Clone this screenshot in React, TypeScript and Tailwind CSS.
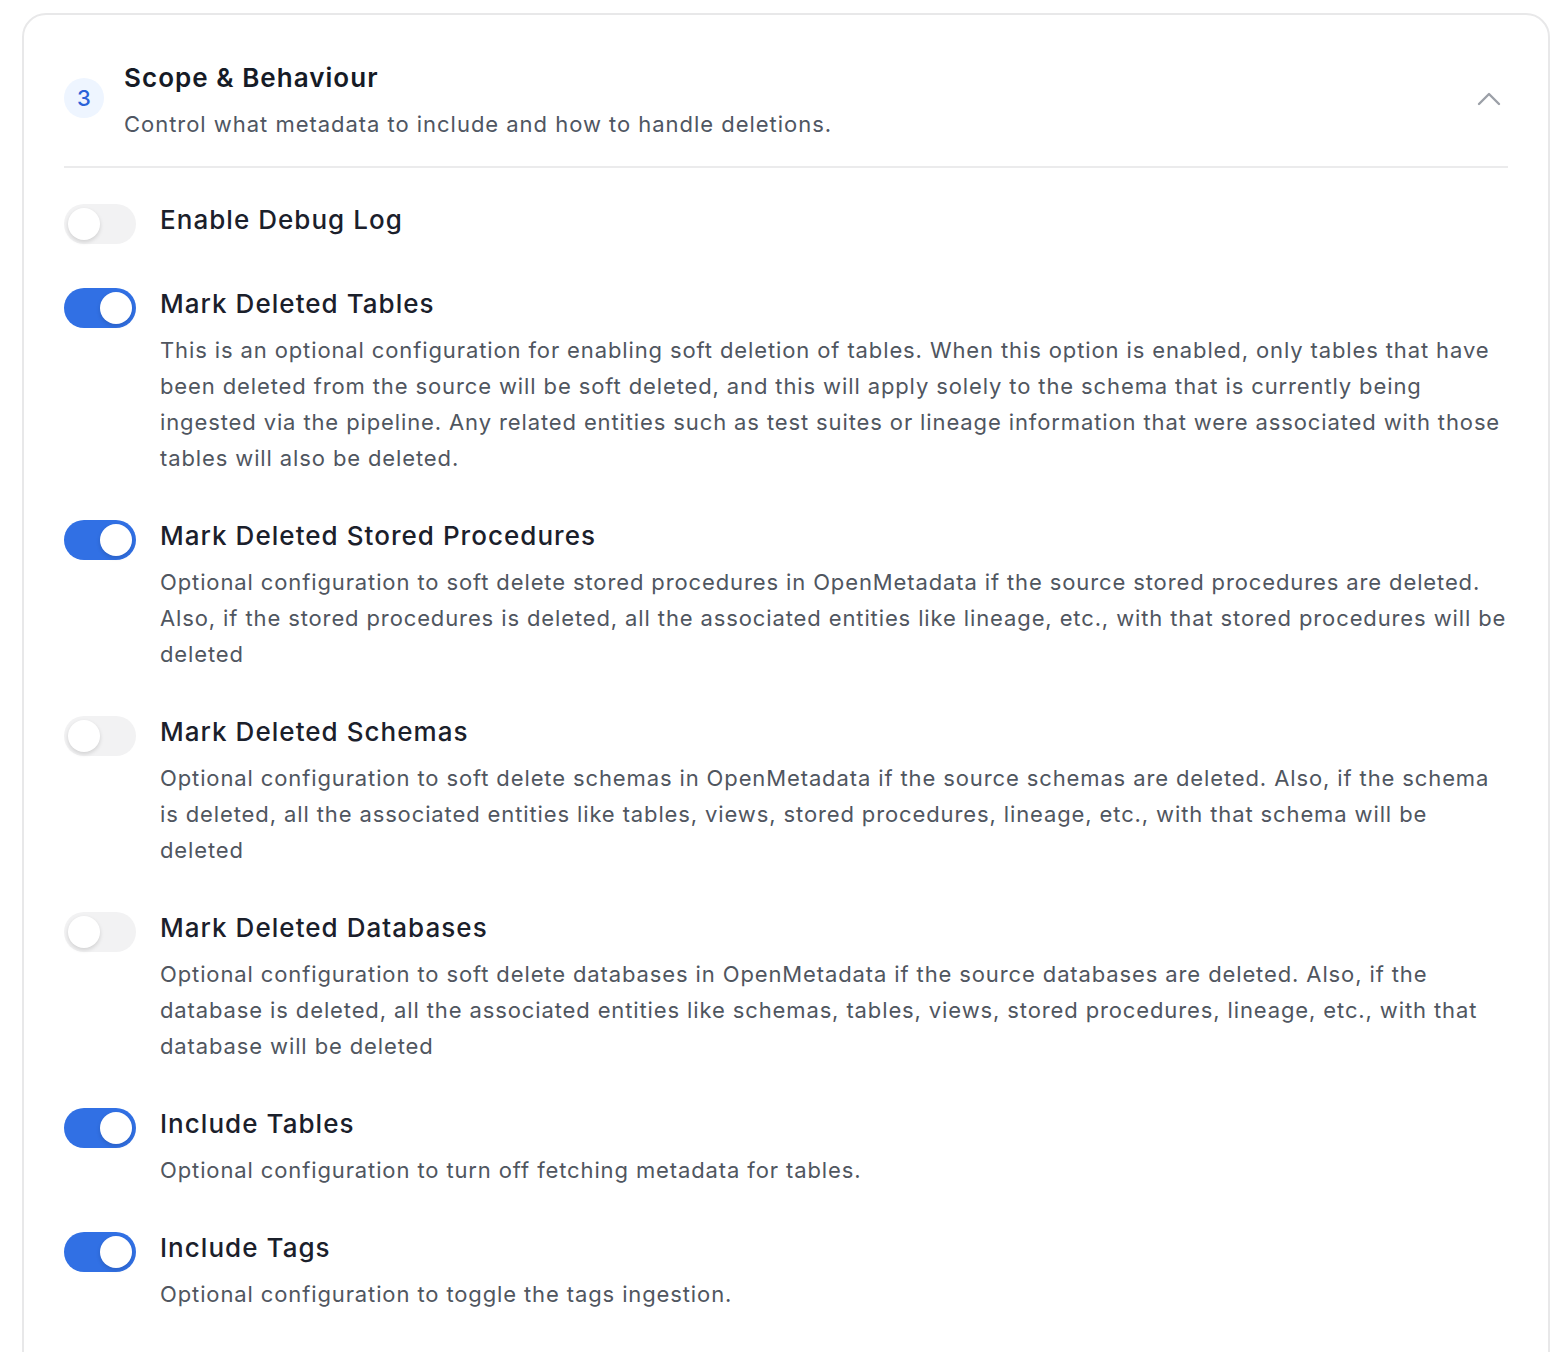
import { useState } from "react";

type Option = {
  key: string;
  label: string;
  description?: string;
  enabled: boolean;
};

const options: Option[] = [
  { key: "debug", label: "Enable Debug Log", enabled: false },
  {
    key: "tables",
    label: "Mark Deleted Tables",
    description:
      "This is an optional configuration for enabling soft deletion of tables. When this option is enabled, only tables that have been deleted from the source will be soft deleted, and this will apply solely to the schema that is currently being ingested via the pipeline. Any related entities such as test suites or lineage information that were associated with those tables will also be deleted.",
    enabled: true,
  },
  {
    key: "procedures",
    label: "Mark Deleted Stored Procedures",
    description:
      "Optional configuration to soft delete stored procedures in OpenMetadata if the source stored procedures are deleted. Also, if the stored procedures is deleted, all the associated entities like lineage, etc., with that stored procedures will be deleted",
    enabled: true,
  },
  {
    key: "schemas",
    label: "Mark Deleted Schemas",
    description:
      "Optional configuration to soft delete schemas in OpenMetadata if the source schemas are deleted. Also, if the schema is deleted, all the associated entities like tables, views, stored procedures, lineage, etc., with that schema will be deleted",
    enabled: false,
  },
  {
    key: "databases",
    label: "Mark Deleted Databases",
    description:
      "Optional configuration to soft delete databases in OpenMetadata if the source databases are deleted. Also, if the database is deleted, all the associated entities like schemas, tables, views, stored procedures, lineage, etc., with that database will be deleted",
    enabled: false,
  },
  {
    key: "includeTables",
    label: "Include Tables",
    description: "Optional configuration to turn off fetching metadata for tables.",
    enabled: true,
  },
  {
    key: "includeTags",
    label: "Include Tags",
    description: "Optional configuration to toggle the tags ingestion.",
    enabled: true,
  },
];

function Toggle({ on, onClick }: { on: boolean; onClick: () => void }) {
  return (
    <button
      type="button"
      role="switch"
      aria-checked={on}
      onClick={onClick}
      className={`flex h-10 w-[72px] shrink-0 items-center rounded-full p-1 transition-colors ${
        on ? "justify-end bg-[#3170e4]" : "justify-start bg-[#f2f2f3]"
      }`}
    >
      <span className="size-8 rounded-full bg-white shadow-[0_2px_4px_rgba(0,0,0,0.14)]" />
    </button>
  );
}

export default function App() {
  const [state, setState] = useState<Record<string, boolean>>(() =>
    Object.fromEntries(options.map((o) => [o.key, o.enabled]))
  );

  return (
    <main className="min-h-screen bg-white pl-[22px] pr-[18px] pt-[13px] font-['Inter','Noto_Sans',sans-serif]">
      <section className="rounded-[24px] border-2 border-[#e8e8e9] px-10 pb-16">
        <header className="flex items-start gap-5 pb-[26px] pt-[47px]">
          <span className="mt-4 grid size-10 shrink-0 place-items-center rounded-full bg-[#eef5ff] text-[22px] font-medium text-[#2a62d8]">
            3
          </span>
          <div className="flex-1">
            <h2 className="text-[26px] font-semibold leading-8 tracking-[0.04em] text-[#161b26]">
              Scope &amp; Behaviour
            </h2>
            <p className="mt-[14px] text-[22px] leading-8 tracking-[0.044em] text-[#4f5662]">
              Control what metadata to include and how to handle deletions.
            </p>
          </div>
          <svg
            className="mr-[7px] mt-[30px] text-[#9ca0a8]"
            width="24"
            height="14"
            viewBox="0 0 24 14"
            fill="none"
            stroke="currentColor"
            strokeWidth="2.4"
            strokeLinecap="round"
            strokeLinejoin="round"
            aria-hidden="true"
          >
            <polyline points="2,12 12,2 22,12" />
          </svg>
        </header>

        <div className="h-[2px] bg-[#ebebec]" />

        <div className="mt-9 flex flex-col gap-11">
          {options.map((option) => (
            <div key={option.key} className="flex items-start gap-6">
              <Toggle
                on={state[option.key]}
                onClick={() => setState((s) => ({ ...s, [option.key]: !s[option.key] }))}
              />
              <div className="min-w-0 flex-1">
                <p className="text-[26px] font-medium leading-8 tracking-[0.04em] text-[#1b202b]">
                  {option.label}
                </p>
                {option.description && (
                  <p className="-mr-1 mt-3 text-[22px] leading-9 tracking-[0.04em] text-[#50565f]">
                    {option.description}
                  </p>
                )}
              </div>
            </div>
          ))}
        </div>
      </section>
    </main>
  );
}
